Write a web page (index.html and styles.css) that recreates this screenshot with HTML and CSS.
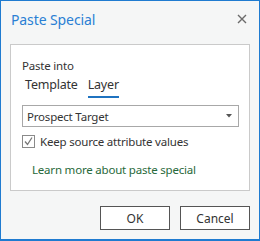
FILE: index.html
```html
<!DOCTYPE html>
<html>
<head>
    <title>Paste Special</title>
    <link rel="stylesheet" href="styles.css">
</head>
<body>
    <div class="dialog">
        <div class="titlebar">
            <span class="title">Paste Special</span>
            <svg class="close" width="10" height="10" viewBox="0 0 10 10">
                <path d="M1 1 L9 9 M9 1 L1 9" stroke="#6b6b6b" stroke-width="1.4" fill="none"/>
            </svg>
        </div>

        <div class="panel">
            <div class="label">Paste into</div>
            <div class="tabs">
                <span class="tab">Template</span>
                <span class="tab active">Layer</span>
            </div>

            <div class="select">
                <span>Prospect Target</span>
                <svg width="6" height="4" viewBox="0 0 6 4">
                    <path d="M0 0 H6 L3 3.5 Z" fill="#555"/>
                </svg>
            </div>

            <label class="check">
                <span class="box">
                    <svg width="11" height="11" viewBox="0 0 11 11">
                        <path d="M2 5.5 L4.5 8.5 L9 1.5" stroke="#777" stroke-width="1.3" fill="none"/>
                    </svg>
                </span>
                Keep source attribute values
            </label>

            <a class="link" href="#">Learn more about paste special</a>
        </div>

        <div class="buttons">
            <button class="btn">OK</button>
            <button class="btn">Cancel</button>
        </div>
    </div>
</body>
</html>
```

FILE: styles.css
```css
body {
    margin: 0;
    font-family: "Noto Sans", "Open Sans", sans-serif;
    background-color: #ffffff;
}
.dialog {
    width: 260px;
    height: 241px;
    box-sizing: border-box;
    border: 1px solid #1f7bd0;
    border-bottom-width: 2px;
    background-color: #f5f6f6;
    display: flex;
    flex-direction: column;
}
.titlebar {
    display: flex;
    align-items: center;
    justify-content: space-between;
    height: 34px;
    padding: 0 12px 0 10px;
    margin-top: 1px;
}
.title {
    color: #2a7fd4;
    font-size: 14px;
    letter-spacing: -0.1px;
}
.close {
    display: block;
}
.panel {
    margin: 8px 9px 0 9px;
    background-color: #ffffff;
    border: 1px solid #cacaca;
    height: 147px;
    box-sizing: border-box;
    padding: 13px 10px 0 11px;
    color: #333333;
    font-size: 11.5px;
    letter-spacing: -0.2px;
}
.label {
    line-height: 16px;
}
.tabs {
    display: flex;
    gap: 10px;
    margin-top: 2px;
    padding-left: 3px;
    font-size: 12.5px;
}
.tab {
    padding-bottom: 2px;
    border-bottom: 2px solid transparent;
    line-height: 18px;
}
.tab.active {
    border-bottom-color: #1f73c0;
}
.select {
    display: flex;
    align-items: center;
    justify-content: space-between;
    height: 22px;
    box-sizing: border-box;
    margin-top: 7px;
    border: 1px solid #a8a8a8;
    padding: 0 6px 0 4px;
}
.check {
    display: flex;
    align-items: center;
    gap: 5px;
    margin-top: 7px;
}
.box {
    width: 13px;
    height: 13px;
    box-sizing: border-box;
    border: 1px solid #8a8a8a;
    display: flex;
    align-items: center;
    justify-content: center;
}
.link {
    display: block;
    margin-top: 13px;
    margin-left: 10px;
    color: #27693a;
    text-decoration: none;
}
.buttons {
    display: flex;
    justify-content: flex-end;
    gap: 10px;
    margin-top: 15px;
    padding-right: 9px;
}
.btn {
    width: 70px;
    height: 24px;
    border: 1px solid #555555;
    background-color: #ffffff;
    color: #333333;
    font-family: "Noto Sans", sans-serif;
    font-size: 12px;
    padding: 0;
}
```
